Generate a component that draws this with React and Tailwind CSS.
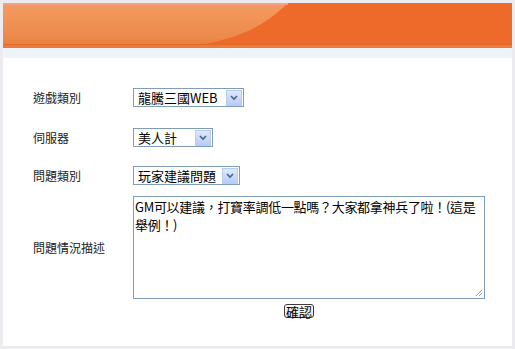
import React from "react";

function Arrow() {
  return (
    <div className="w-[16px] h-[16px] border border-[#b8cbf0] bg-gradient-to-b from-[#dde8fd] to-[#b7cdf6] flex items-center justify-center">
      <svg width="8" height="6" viewBox="0 0 8 6">
        <path d="M1 1 L4 4 L7 1" fill="none" stroke="#4d6185" strokeWidth="1.6" />
      </svg>
    </div>
  );
}

function Select({ text, w }) {
  return (
    <div className={`${w} h-[19px] border border-[#7f9db9] bg-white flex items-center justify-between pl-[4px] pr-[1px]`}>
      <span className="text-[13px] leading-none text-black" style={{ fontFamily: '"Noto Sans CJK TC", "Liberation Sans", sans-serif' }}>{text}</span>
      <Arrow />
    </div>
  );
}

const label = "text-[12px] leading-none text-[#222]";
const fam = { fontFamily: '"Noto Sans CJK TC", sans-serif' };

export default function App() {
  return (
    <div className="w-[515px] h-[349px] bg-[#ecebf0] p-[3px]">
      <div className="w-[509px] h-[343px] bg-white flex flex-col">
        <div className="h-[45px] relative overflow-hidden bg-[#ee6a2a]">
          <svg width="509" height="45" viewBox="0 0 509 45" className="block">
            <defs>
              <linearGradient id="lg" x1="0" y1="0" x2="0" y2="1">
                <stop offset="0" stopColor="#f39a66" />
                <stop offset="0.3" stopColor="#f29558" />
                <stop offset="0.8" stopColor="#ec8a4c" />
                <stop offset="1" stopColor="#ea7f3c" />
              </linearGradient>
            </defs>
            <rect x="0" y="0" width="509" height="45" fill="#ee6a2a" />
            <path d="M0 0 L285 0 C 262 22, 240 34, 196 42 L0 42 Z" fill="url(#lg)" />
            <rect x="0" y="0" width="285" height="2" fill="#f7a07e" />
            <rect x="0" y="41" width="509" height="1" fill="#e06a2c" />
            <rect x="0" y="42" width="509" height="3" fill="#ee7a3a" />
          </svg>
        </div>
        <div className="h-[10px] bg-[#eef3f7]" />
        <div className="flex flex-col pl-[30px] pt-[30px]" style={fam}>
          <div className="flex items-center h-[19px]">
            <div className={`w-[100px] ${label}`}>遊戲類別</div>
            <Select text="龍騰三國WEB" w="w-[111px]" />
          </div>
          <div className="flex items-center h-[19px] mt-[21px]">
            <div className={`w-[100px] ${label}`}>伺服器</div>
            <Select text="美人計" w="w-[80px]" />
          </div>
          <div className="flex items-center h-[19px] mt-[19px]">
            <div className={`w-[100px] ${label}`}>問題類別</div>
            <Select text="玩家建議問題" w="w-[107px]" />
          </div>
          <div className="flex items-center mt-[11px]">
            <div className={`w-[100px] ${label}`}>問題情況描述</div>
            <div className="relative w-[352px] h-[103px] border border-[#7f9db9] bg-white pl-[1px] pt-[1px]">
              <div className="text-[13px] leading-[18px] tracking-[-0.3px] text-black" style={{ fontFamily: '"Noto Sans CJK TC", sans-serif' }}>
                GM可以建議，打寶率調低一點嗎？大家都拿神兵了啦！(這是舉例！)
              </div>
              <svg width="9" height="9" viewBox="0 0 9 9" className="absolute right-[1px] bottom-[1px]">
                <path d="M8 2 L2 8 M8 5 L5 8" stroke="#999" strokeWidth="1" />
              </svg>
            </div>
          </div>
          <div className="flex mt-[5px] pl-[251px]">
            <div className="h-[14px] px-[1px] border border-[#3c3c3c] rounded-[3px] bg-gradient-to-b from-white to-[#ebe9e2] flex items-center text-[13px] leading-none text-black">確認</div>
          </div>
        </div>
      </div>
    </div>
  );
}
